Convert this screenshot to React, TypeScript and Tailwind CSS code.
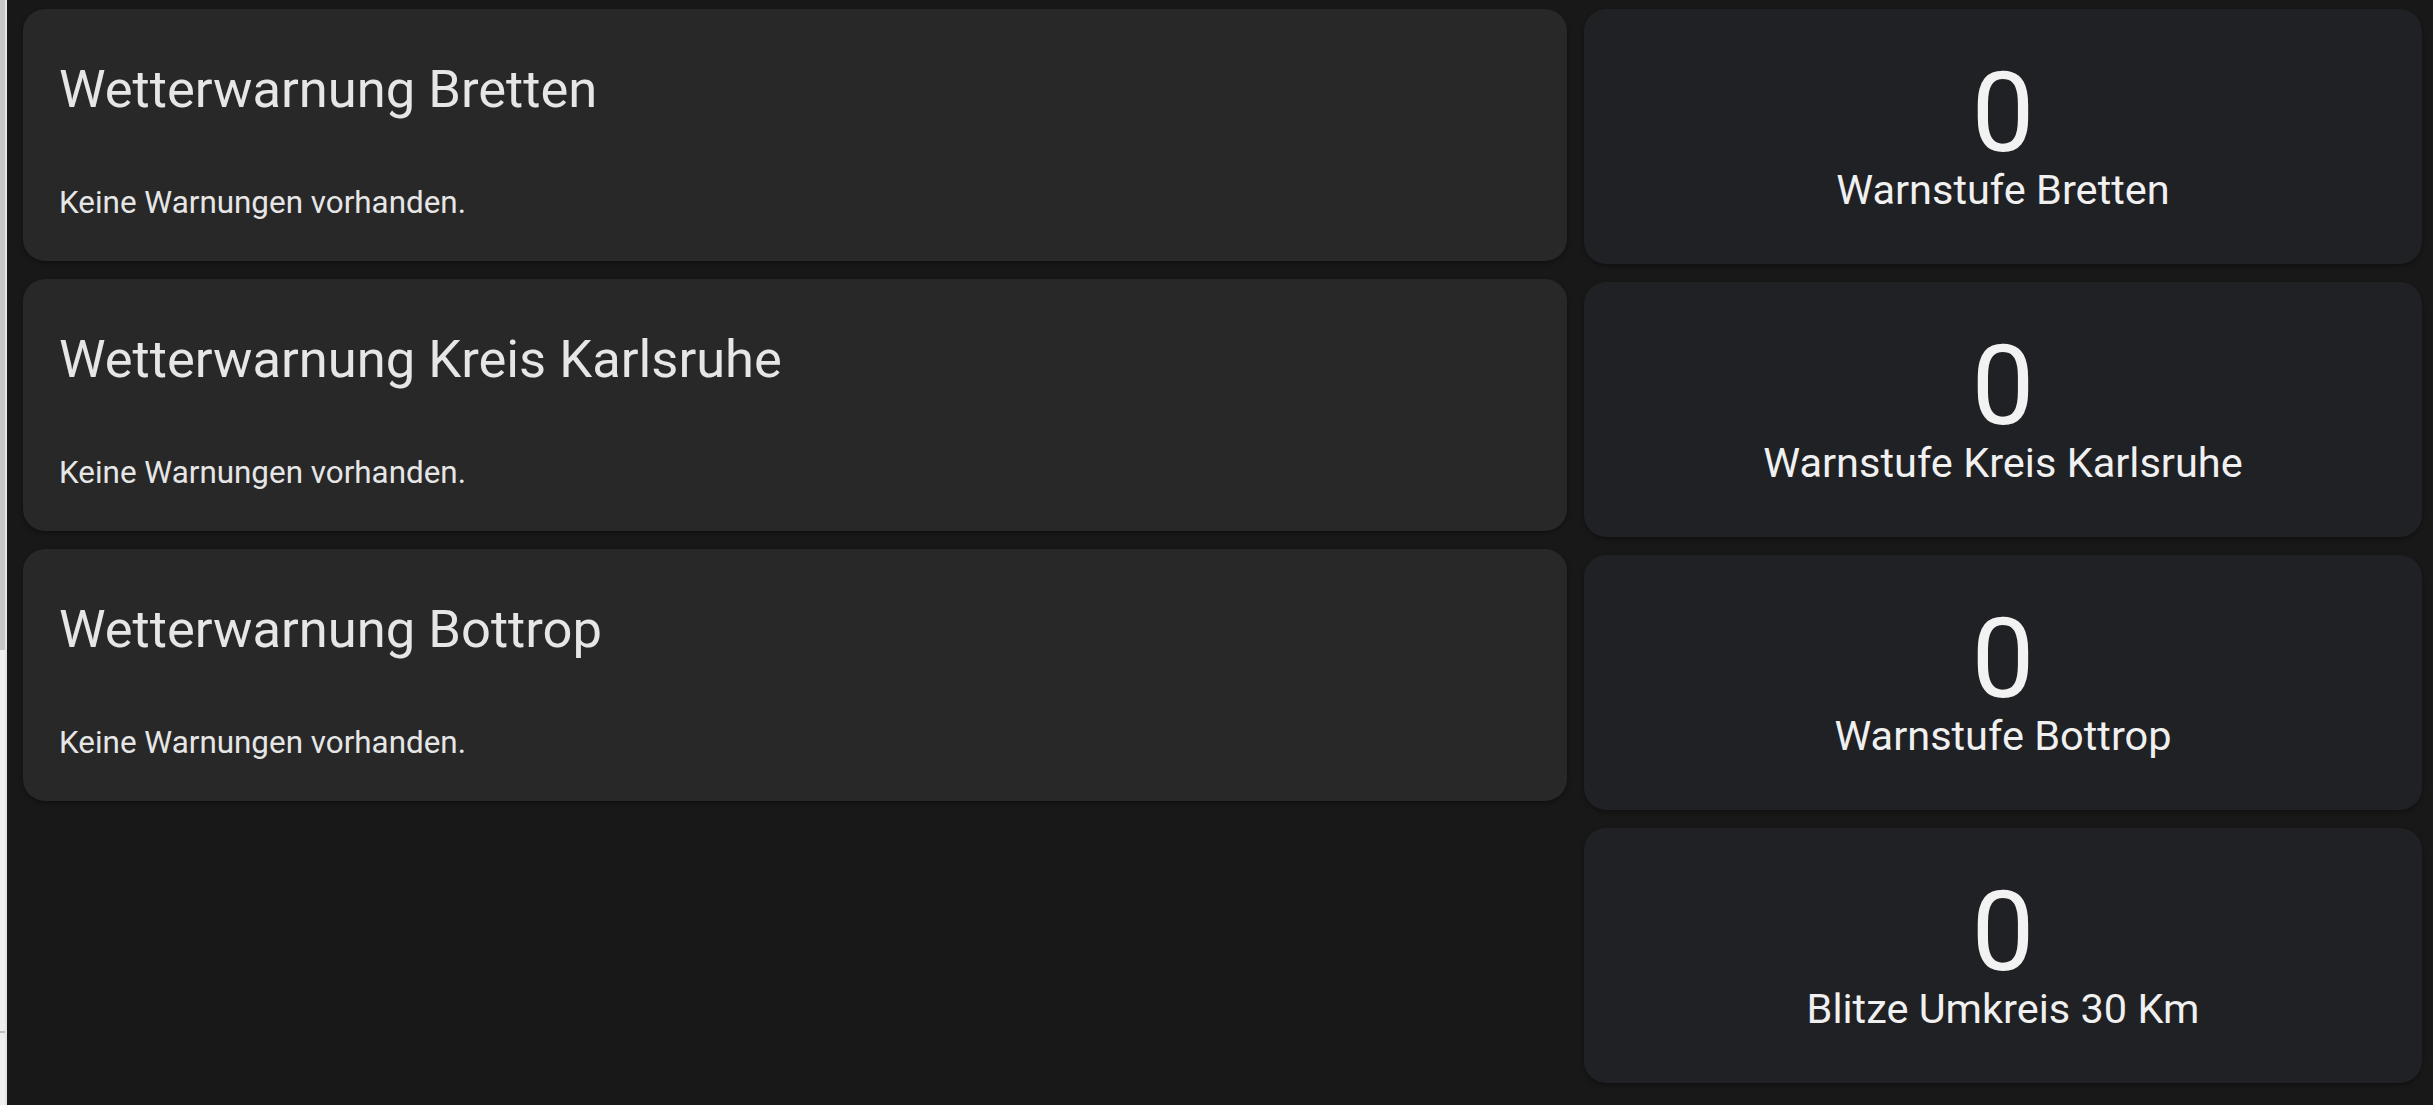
const WARNINGS = ['Wetterwarnung Bretten', 'Wetterwarnung Kreis Karlsruhe', 'Wetterwarnung Bottrop'];

const LEVELS = [
  { value: '0', label: 'Warnstufe Bretten' },
  { value: '0', label: 'Warnstufe Kreis Karlsruhe' },
  { value: '0', label: 'Warnstufe Bottrop' },
  { value: '0', label: 'Blitze Umkreis 30 Km' },
];

function WarningCard({ title }: { title: string }) {
  return (
    <div className="h-[252px] rounded-[22px] bg-[#282828] px-[36px] shadow-[0_2px_4px_rgba(0,0,0,0.35)]">
      <h2 className="pt-[49px] text-[52.5px] leading-[62px] font-normal text-[#e6e6e6]">{title}</h2>
      <p className="mt-[65px] text-[31.4px] leading-[36px] text-[#e6e6e6]">Keine Warnungen vorhanden.</p>
    </div>
  );
}

function LevelCard({ value, label }: { value: string; label: string }) {
  return (
    <div className="h-[255px] rounded-[22px] bg-[#202124] flex flex-col items-center justify-center shadow-[0_2px_4px_rgba(0,0,0,0.35)]">
      <span className="text-[112px] leading-[107px] text-[#f2f2f2]">{value}</span>
      <span className="text-[41.5px] leading-[48px] text-[#f0f0f0]">{label}</span>
    </div>
  );
}

export default function App() {
  return (
    <div className="flex h-[1105px] w-full overflow-hidden bg-[#181818]" style={{ fontFamily: 'Roboto, "Noto Sans", sans-serif' }}>
      {/* side strip (scrollbar of the host page) */}
      <div className="flex w-[7px] shrink-0">
        <div className="flex w-[5px] flex-col bg-[#efefef]">
          <div className="h-[650px] bg-[#c6c6c6]" />
          <div className="mt-[381px] h-[2px] bg-[#c0c0c0]" />
        </div>
        <div className="w-[2px] bg-[#e4e4e4]" />
      </div>

      <div className="flex flex-1 gap-[17px] pt-[9px] pl-[16px] pr-[11px]">
        <div className="flex flex-1 flex-col gap-[18px]">
          {WARNINGS.map((w) => (
            <WarningCard key={w} title={w} />
          ))}
        </div>
        <div className="flex w-[838px] flex-col gap-[18px]">
          {LEVELS.map((l) => (
            <LevelCard key={l.label} value={l.value} label={l.label} />
          ))}
        </div>
      </div>
    </div>
  );
}
